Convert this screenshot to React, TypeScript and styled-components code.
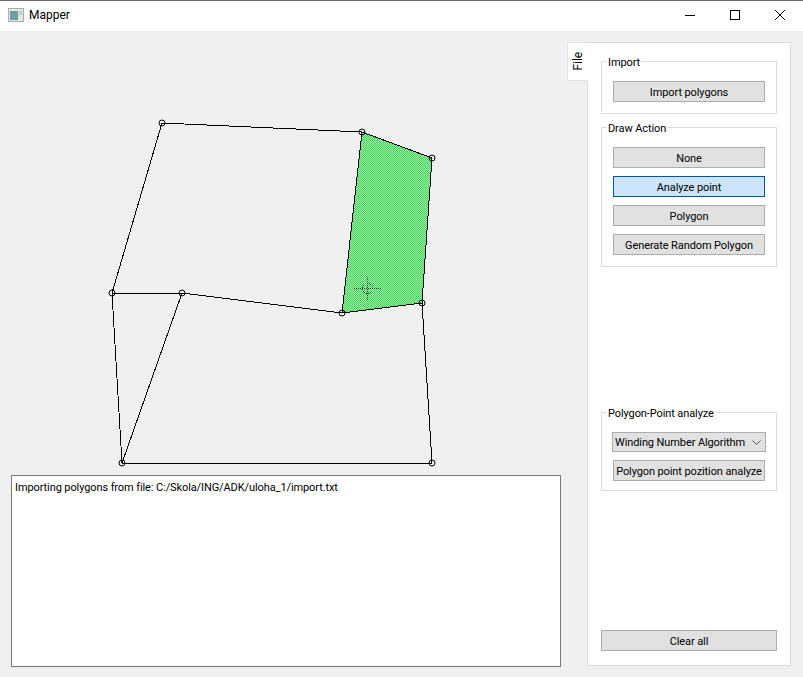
import styled, { createGlobalStyle } from 'styled-components'

const GlobalStyle = createGlobalStyle`
  html, body {
    margin: 0;
    padding: 0;
    background: #f0f0f0;
  }
  body {
    width: 803px;
    height: 677px;
    overflow: hidden;
    font-family: Roboto, "Noto Sans", sans-serif;
    font-size: 11px;
    letter-spacing: -0.1px;
    color: #000;
  }
`

const vertices: [number, number][] = [
  [162, 123], [362, 132], [432, 158], [422, 303], [342, 313],
  [182, 293], [112, 293], [122, 463], [432, 463],
]

const edges: [number, number][] = [
  [0, 1], [0, 6], [1, 4], [1, 2], [2, 3], [3, 4], [4, 5],
  [5, 6], [6, 7], [5, 7], [7, 8], [8, 3],
]

function AppIcon() {
  return (
    <svg width="16" height="16" viewBox="0 0 16 16">
      <rect x="0.5" y="1.5" width="15" height="13" fill="#e4e6e6" stroke="#a8adad" />
      <rect x="2" y="4" width="8" height="9" fill="#6f9ea2" />
      <rect x="11" y="4" width="3" height="4" fill="#c8cccc" />
    </svg>
  )
}

function Canvas() {
  return (
    <CanvasSvg width="567" height="444" viewBox="0 31 567 444">
      <defs>
        <pattern id="dense" width="2" height="2" patternUnits="userSpaceOnUse">
          <rect width="2" height="2" fill="#a6e9ae" />
          <rect width="1" height="1" fill="#3ed655" />
          <rect x="1" y="1" width="1" height="1" fill="#3ed655" />
        </pattern>
      </defs>
      <polygon points="362,132 432,158 422,303 342,313" fill="url(#dense)" />
      <g stroke="#003a10" strokeDasharray="1 1" fill="none" shapeRendering="crispEdges">
        <line x1="354" y1="288.5" x2="381" y2="288.5" />
        <line x1="367.5" y1="277" x2="367.5" y2="301" />
        <circle cx="367.5" cy="288.5" r="5" />
      </g>
      <g stroke="#000" shapeRendering="crispEdges">
        {edges.map(([a, b]) => (
          <line
            key={`${a}-${b}`}
            x1={vertices[a][0]}
            y1={vertices[a][1]}
            x2={vertices[b][0]}
            y2={vertices[b][1]}
          />
        ))}
      </g>
      {vertices.map(([x, y]) => (
        <circle key={`${x}-${y}`} cx={x} cy={y} r="3" fill="none" stroke="#000" />
      ))}
    </CanvasSvg>
  )
}

export default function App() {
  return (
    <>
      <GlobalStyle />
      <Window>
        <TitleBar>
          <TitleLeft>
            <AppIcon />
            <span>Mapper</span>
          </TitleLeft>
          <WindowControls>
            <WindowButton>
              <svg width="12" height="12" viewBox="0 0 12 12">
                <line x1="1" y1="6.5" x2="11" y2="6.5" stroke="#000" />
              </svg>
            </WindowButton>
            <WindowButton>
              <svg width="12" height="12" viewBox="0 0 12 12">
                <rect x="1.5" y="1.5" width="9" height="9" fill="none" stroke="#000" />
              </svg>
            </WindowButton>
            <WindowButton>
              <svg width="12" height="12" viewBox="0 0 12 12">
                <path d="M1 1 L11 11 M11 1 L1 11" stroke="#000" />
              </svg>
            </WindowButton>
          </WindowControls>
        </TitleBar>
        <Body>
          <LeftColumn>
            <Canvas />
            <LogBox>Importing polygons from file: C:/Skola/ING/ADK/uloha_1/import.txt</LogBox>
          </LeftColumn>
          <TabWidget>
            <Tab>
              <TabLabel>File</TabLabel>
            </Tab>
            <TabPane>
              <Group $height={53}>
                <Legend>Import</Legend>
                <Button>Import polygons</Button>
              </Group>
              <Group $height={140}>
                <Legend>Draw Action</Legend>
                <Button>None</Button>
                <Button $active>Analyze point</Button>
                <Button>Polygon</Button>
                <Button>Generate Random Polygon</Button>
              </Group>
              <Spacer $size={132} />
              <Group $height={79}>
                <Legend>Polygon-Point analyze</Legend>
                <Combo>
                  <span>Winding Number Algorithm</span>
                  <svg width="9" height="5" viewBox="0 0 9 5">
                    <path d="M0.5 0.5 L4.5 4.5 L8.5 0.5" fill="none" stroke="#555" />
                  </svg>
                </Combo>
                <Button>Polygon point pozition analyze</Button>
              </Group>
              <Spacer $size={126} />
              <ClearButton>Clear all</ClearButton>
            </TabPane>
          </TabWidget>
        </Body>
      </Window>
    </>
  )
}

const Window = styled.div`
  display: flex;
  flex-direction: column;
  width: 803px;
  height: 677px;
`
const TitleBar = styled.div`
  display: flex;
  justify-content: space-between;
  align-items: flex-start;
  height: 30px;
  background: #fff;
  border-top: 1px solid #6f6f6f;
  flex: none;
`
const TitleLeft = styled.div`
  display: flex;
  align-items: center;
  gap: 5px;
  height: 28px;
  padding-left: 8px;
  font-size: 12px;
  letter-spacing: 0;
`
const WindowControls = styled.div`
  display: flex;
  padding-right: 1px;
`
const WindowButton = styled.div`
  display: flex;
  align-items: center;
  justify-content: center;
  width: 45px;
  height: 28px;
`
const Body = styled.div`
  display: flex;
  flex: 1;
  min-height: 0;
`
const LeftColumn = styled.div`
  display: flex;
  flex-direction: column;
  width: 567px;
  flex: none;
`
const CanvasSvg = styled.svg`
  display: block;
  flex: none;
`
const LogBox = styled.div`
  margin-left: 11px;
  width: 550px;
  height: 192px;
  box-sizing: border-box;
  padding: 5px 3px;
  background: #fff;
  border: 1px solid #7a7a7a;
`
const TabWidget = styled.div`
  display: flex;
  align-items: flex-start;
  padding-top: 11px;
`
const Tab = styled.div`
  position: relative;
  z-index: 1;
  display: flex;
  align-items: center;
  justify-content: center;
  width: 21px;
  height: 39px;
  margin-right: -1px;
  background: #fff;
  border: 1px solid #e4e4e4;
  border-right: none;
  box-sizing: border-box;
`
const TabLabel = styled.span`
  writing-mode: vertical-rl;
  transform: rotate(180deg);
  margin-top: -1px;
  font-size: 12px;
`
const TabPane = styled.div`
  display: flex;
  flex-direction: column;
  width: 204px;
  height: 624px;
  box-sizing: border-box;
  padding: 18px 13px 14px 13px;
  background: #fff;
  border: 1px solid #d9d9d9;
`
const Group = styled.div<{ $height: number }>`
  position: relative;
  display: flex;
  flex-direction: column;
  align-items: center;
  gap: 8px;
  height: ${(p) => p.$height}px;
  box-sizing: border-box;
  padding-top: 19px;
  margin-bottom: 13px;
  border: 1px solid #dcdcdc;
  flex: none;
`
const Legend = styled.span`
  position: absolute;
  top: -8px;
  left: 5px;
  padding: 1px 1px 0;
  line-height: 15px;
  background: #fff;
`
const Button = styled.div<{ $active?: boolean }>`
  display: flex;
  align-items: center;
  justify-content: center;
  width: 152px;
  height: 21px;
  padding-top: 1px;
  box-sizing: border-box;
  white-space: nowrap;
  background: ${(p) => (p.$active ? '#cce4f7' : '#e1e1e1')};
  border: 1px solid ${(p) => (p.$active ? '#005499' : '#adadad')};
`
const Combo = styled.div`
  display: flex;
  align-items: center;
  justify-content: space-between;
  width: 154px;
  height: 20px;
  box-sizing: border-box;
  padding: 0 4px 0 2px;
  white-space: nowrap;
  background: #e1e1e1;
  border: 1px solid #adadad;
`
const Spacer = styled.div<{ $size: number }>`
  height: ${(p) => p.$size}px;
  flex: none;
`
const ClearButton = styled(Button)`
  width: 176px;
  flex: none;
`
